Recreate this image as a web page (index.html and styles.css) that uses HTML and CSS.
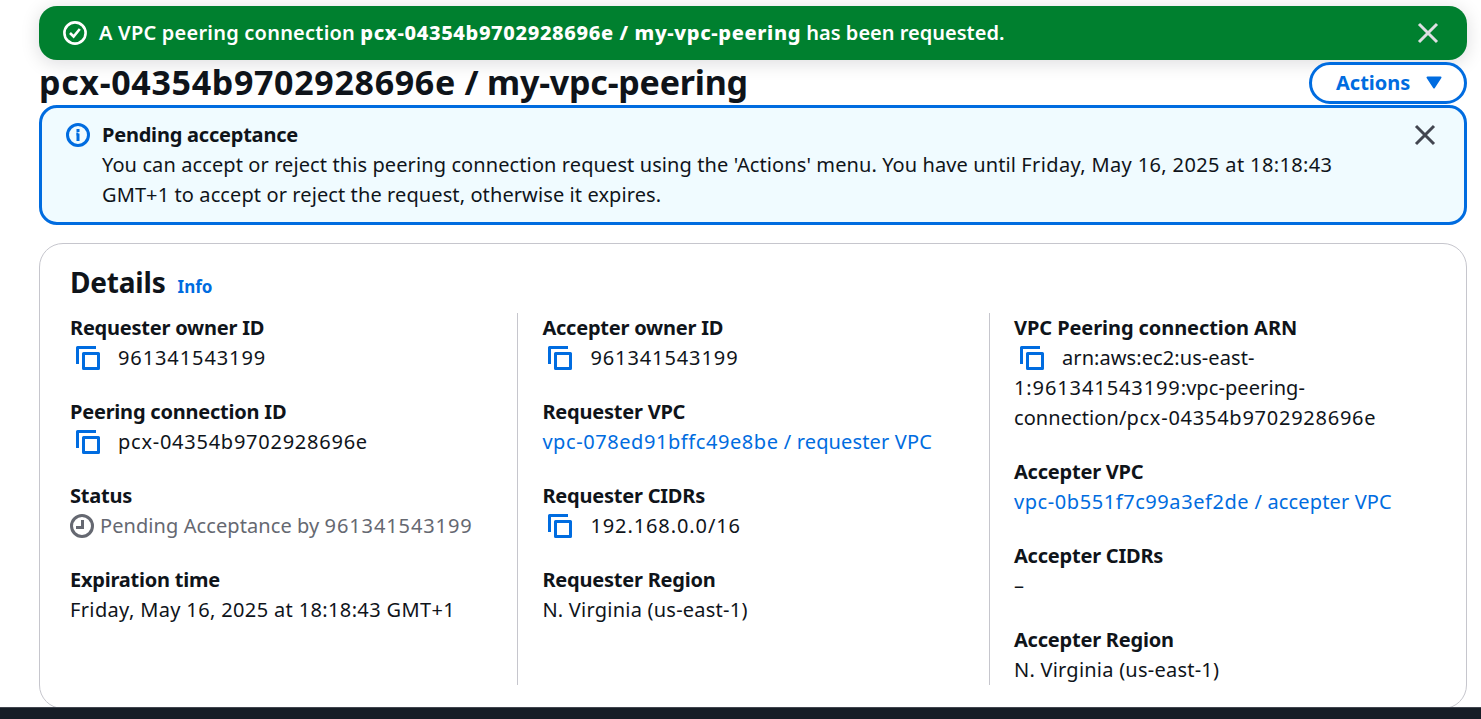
FILE: index.html
```html
<!DOCTYPE html>
<html lang="en">
<head>
<meta charset="utf-8">
<title>VPC peering connection</title>
<link rel="stylesheet" href="styles.css">
</head>
<body>
<svg class="sprite" aria-hidden="true">
  <symbol id="copy" viewBox="0 0 24 24"><path d="M1.5 18V1.5H20M7.5 7.5h15v15h-15z" fill="none" stroke="currentColor" stroke-width="3" stroke-linejoin="round"/></symbol>
  <symbol id="close" viewBox="0 0 24 24"><path d="M3 3l18 18M21 3L3 21" fill="none" stroke="currentColor" stroke-width="3"/></symbol>
</svg>
<div class="page">
  <main class="content">
    <div class="flash">
      <svg class="icon" viewBox="0 0 24 24"><g fill="none" stroke="currentColor" stroke-width="2.6"><circle cx="12" cy="12" r="10.6"/><path d="M7 12l3.6 3.5 6.2-7.5"/></g></svg>
      <p class="flash-text"><span class="flash-lead">A VPC peering connection</span> <b class="flash-id">pcx-04354b9702928696e / my-vpc-peering</b> <span>has been requested.</span></p>
      <svg class="icon"><use href="#close"/></svg>
    </div>
    <header class="header">
      <h1 class="title"><span class="title-id">pcx-04354b9702928696e</span> / my-vpc-peering</h1>
      <button class="actions"><span>Actions</span><svg class="caret" viewBox="0 0 16 13"><path d="M1.5 1.5h13L8 11.5z" fill="currentColor" stroke="currentColor" stroke-width="2" stroke-linejoin="round"/></svg></button>
    </header>
    <section class="alert">
      <svg class="icon alert-icon" viewBox="0 0 24 24"><g fill="none" stroke="currentColor" stroke-width="3"><circle cx="12" cy="12" r="10.5"/><path d="M12 6v3M12 10.5V18M10.3 11h2"/></g></svg>
      <div class="alert-body">
        <h2 class="label">Pending acceptance</h2>
        <p class="alert-text">You can accept or reject this peering connection request using the 'Actions' menu. You have until <span class="date">Friday, May 16, 2025 at 18:18:43</span><br>GMT+1 to accept or reject the request, otherwise it expires.</p>
      </div>
      <svg class="icon alert-close"><use href="#close"/></svg>
    </section>
    <section class="card">
      <div class="card-head"><h2 class="card-title">Details</h2><a class="info">Info</a></div>
      <div class="grid">
        <div class="col">
          <div><h3 class="label">Requester owner ID</h3><p class="value"><svg class="copy"><use href="#copy"/></svg><span class="num">961341543199</span></p></div>
          <div><h3 class="label">Peering connection ID</h3><p class="value"><svg class="copy"><use href="#copy"/></svg><span class="id">pcx-04354b9702928696e</span></p></div>
          <div><h3 class="label">Status</h3><p class="value status"><svg class="icon" viewBox="0 0 24 24"><g fill="none" stroke="currentColor" stroke-width="3"><circle cx="12" cy="12" r="10.5"/><path d="M12.5 6v7.5H6"/></g></svg><span>Pending Acceptance by <span class="num">961341543199</span></span></p></div>
          <div><h3 class="label">Expiration time</h3><p class="value date">Friday, May 16, 2025 at 18:18:43 GMT+1</p></div>
        </div>
        <div class="col">
          <div><h3 class="label">Accepter owner ID</h3><p class="value"><svg class="copy"><use href="#copy"/></svg><span class="num">961341543199</span></p></div>
          <div><h3 class="label">Requester VPC</h3><p class="value"><a class="link"><span class="id">vpc-078ed91bffc49e8be</span> / requester VPC</a></p></div>
          <div><h3 class="label">Requester CIDRs</h3><p class="value"><svg class="copy"><use href="#copy"/></svg><span class="num">192.168.0.0/16</span></p></div>
          <div><h3 class="label">Requester Region</h3><p class="value region">N. Virginia (us-east-1)</p></div>
        </div>
        <div class="col">
          <div><h3 class="label arn-label">VPC Peering connection ARN</h3><p class="value"><svg class="copy"><use href="#copy"/></svg>arn:aws:ec2:us-east-<br><span class="num">1:961341543199</span>:vpc-peering-<br>connection/<span class="id">pcx-04354b9702928696e</span></p></div>
          <div><h3 class="label">Accepter VPC</h3><p class="value"><a class="link"><span class="id">vpc-0b551f7c99a3ef2de</span> / accepter VPC</a></p></div>
          <div><h3 class="label">Accepter CIDRs</h3><p class="value">–</p></div>
          <div><h3 class="label">Accepter Region</h3><p class="value region">N. Virginia (us-east-1)</p></div>
        </div>
      </div>
    </section>
  </main>
  <footer class="footer"></footer>
</div>
</body>
</html>
```
FILE: styles.css
```css
* { box-sizing: border-box; margin: 0; }
body { background: #fff; color: #0f141a; font: 20px/30px "Noto Sans", sans-serif; letter-spacing: .08px; overflow: hidden; }
.sprite { position: absolute; width: 0; height: 0; }
.page { height: 719px; display: flex; flex-direction: column; overflow: hidden; }
.content { height: 707px; padding: 6px 14px 0 39px; overflow: hidden; flex: none; }
.footer { height: 12px; background: #161d26; border-top: 1px solid #424650; }
.icon { width: 24px; height: 24px; flex: none; display: block; }
p, h1, h2, h3, button { white-space: nowrap; }

.flash { height: 54px; padding: 0 27px 0 24px; display: flex; align-items: center; background: #00802f; color: #fff; border-radius: 18px; box-shadow: 0 3px 18px 1px rgba(0, 7, 22, .13); }
.flash-text { flex: 1; margin-left: 12px; font-weight: 600; letter-spacing: 0; }
.flash-lead { letter-spacing: .22px; }
.flash-id { font-weight: 800; letter-spacing: .64px; }
.flash .icon:last-child { color: #dedee3; }

.header { height: 45px; display: flex; align-items: center; justify-content: space-between; }
.title { font-size: 34px; line-height: 45px; font-weight: 700; letter-spacing: -.22px; }
.title-id { letter-spacing: .66px; }
.actions { width: 158px; height: 42px; padding: 0 22px 0 24px; display: flex; align-items: center; justify-content: space-between; border: 3px solid #006ce0; border-radius: 21px; background: #fff; color: #006ce0; font: 700 20px/30px "Noto Sans", sans-serif; }
.caret { width: 16px; height: 13px; }

.alert { height: 120px; padding: 12px 27px 0 24px; display: flex; border: 3px solid #006ce0; border-radius: 18px; background: #f0fbff; }
.alert-icon { margin-top: 3px; color: #006ce0; }
.alert-body { flex: 1; margin-left: 12px; }
.alert-text { letter-spacing: .1px; }
.alert-close { margin-top: 3px; color: #424650; }

.card { height: 466px; margin-top: 18px; padding: 18px 30px 0; border: 1px solid #c6c6cd; border-radius: 24px; }
.card-head { height: 51px; display: flex; align-items: baseline; gap: 12px; }
.card-title { font-size: 28px; line-height: 40px; font-weight: 700; letter-spacing: -.2px; }
.info { color: #006ce0; font-size: 17px; font-weight: 700; letter-spacing: 0; }
.grid { display: grid; grid-template-columns: 447px 472px 1fr; height: 372px; }
.col { display: flex; flex-direction: column; gap: 24px; }
.col + .col { padding-left: 24.4px; border-left: 1px solid #c6c6cd; }
.col + .col + .col { padding-left: 24px; }
.label { font-size: 20px; line-height: 30px; font-weight: 700; letter-spacing: -.22px; }
.arn-label { letter-spacing: -.08px; }
.copy { width: 24px; height: 24px; margin: 0 18px 0 6px; vertical-align: -5px; color: #006ce0; }
.value { line-height: 30px; }
.num { letter-spacing: .9px; }
.id { letter-spacing: .75px; }
.link .id { letter-spacing: .57px; }
.date { letter-spacing: .36px; }
.region { letter-spacing: .23px; }
.status { display: flex; align-items: center; gap: 6px; color: #656871; }
.link { color: #006ce0; letter-spacing: .14px; }
```
